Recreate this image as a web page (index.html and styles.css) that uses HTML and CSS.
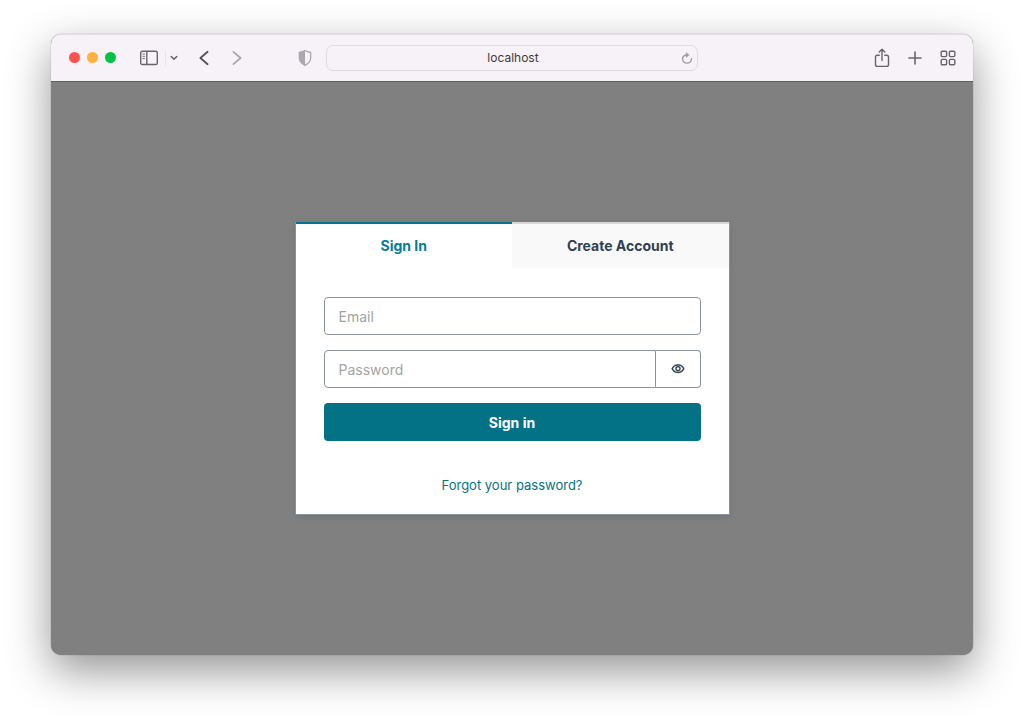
FILE: index.html
```html
<!DOCTYPE html>
<html lang="en">
<head>
<meta charset="utf-8">
<title>Sign In</title>
<link rel="stylesheet" href="styles.css">
</head>
<body>
<div class="window">
  <header class="toolbar">
    <div class="tools">
      <div class="lights"><span class="light close"></span><span class="light minimize"></span><span class="light zoom"></span></div>
      <button class="tool sidebar" aria-label="Sidebar">
        <svg width="18" height="16" viewBox="0 0 18 16" fill="none" stroke="currentColor" stroke-width="1.4"><rect x=".7" y="1.2" width="16.6" height="13.3" rx="1.6"/><path d="M6.8 1.2v13.3"/><path d="M2.6 4h2.2M2.6 6.3h2.2M2.6 8.6h2.2" stroke-width="1"/></svg>
      </button>
      <button class="tool menu" aria-label="Tab groups">
        <svg width="8" height="6" viewBox="0 0 8 6" fill="none" stroke="currentColor" stroke-width="1.5" stroke-linecap="round" stroke-linejoin="round"><path d="M1.200 1.500l2.800 2.600 2.800-2.600"/></svg>
      </button>
      <button class="tool back" aria-label="Back">
        <svg width="10" height="16" viewBox="0 0 10 16" fill="none" stroke="currentColor" stroke-width="1.8" stroke-linecap="round" stroke-linejoin="round"><path d="M8.600 1.800L1.400 8l7.200 6.200"/></svg>
      </button>
      <button class="tool forward" aria-label="Forward" disabled>
        <svg width="10" height="16" viewBox="0 0 10 16" fill="none" stroke="currentColor" stroke-width="1.700" stroke-linecap="round" stroke-linejoin="round"><path d="M1.400 1.800L8.600 8l-7.200 6.200"/></svg>
      </button>
      <button class="tool shield" aria-label="Privacy report">
        <svg width="14" height="18" viewBox="0 0 14 18" fill="none"><path d="M7 1.500c1.800 1.200 3.600 1.600 5.700 2v5.200c0 3.800-2.600 6.100-5.700 7.600-3.100-1.500-5.700-3.800-5.700-7.600V3.500C3.400 3.100 5.200 2.700 7 1.500z" stroke="currentColor" stroke-width="1.300" stroke-linejoin="round"/><path d="M7 1.500v14.800c-3.100-1.500-5.700-3.800-5.700-7.600V3.500C3.400 3.100 5.200 2.700 7 1.500z" fill="currentColor"/></svg>
      </button>
    </div>
    <div class="address">
      <input class="url" type="text" value="localhost" aria-label="Address">
      <button class="tool reload" aria-label="Reload">
        <svg width="12" height="12" viewBox="0 0 12 12" fill="none" stroke="currentColor" stroke-width="1.400" stroke-linecap="round" stroke-linejoin="round"><path d="M6.500 3C3.700 2.600 1.500 4.400 1.500 6.800c0 2.500 2 4.300 4.500 4.300s4.500-1.800 4.500-4.300"/><path d="M5.200.8v4.600L8 3.100z" fill="currentColor" stroke-width=".5"/></svg>
      </button>
    </div>
    <div class="tools actions">
      <button class="tool" aria-label="Share">
        <svg width="18" height="20" viewBox="0 0 18 20" fill="none" stroke="currentColor" stroke-width="1.400" stroke-linecap="round" stroke-linejoin="round"><path d="M6.200 7.300H4.400c-1.200 0-1.900.7-1.900 1.900v7.300c0 1.200.7 1.900 1.900 1.900h9.200c1.200 0 1.900-.7 1.900-1.900V9.200c0-1.200-.7-1.900-1.900-1.900h-1.800M9 12.500V1.300M6.200 4L9 1.200 11.800 4"/></svg>
      </button>
      <button class="tool" aria-label="New tab">
        <svg width="18" height="18" viewBox="0 0 18 18" fill="none" stroke="currentColor" stroke-width="1.600" stroke-linecap="round"><path d="M9 3v12M3 9h12"/></svg>
      </button>
      <button class="tool" aria-label="Tab overview">
        <svg width="18" height="18" viewBox="0 0 18 18" fill="none" stroke="currentColor" stroke-width="1.400"><rect x="2.200" y="2.200" width="5.400" height="5.400" rx="1.100"/><rect x="10.400" y="2.200" width="5.400" height="5.400" rx="1.100"/><rect x="2.200" y="10.400" width="5.400" height="5.400" rx="1.100"/><rect x="10.400" y="10.400" width="5.400" height="5.400" rx="1.100"/></svg>
      </button>
    </div>
  </header>
  <main class="page">
    <section class="card">
      <div class="tabs" role="tablist">
        <button class="tab active" role="tab" aria-selected="true">Sign In</button>
        <button class="tab" role="tab" aria-selected="false">Create Account</button>
      </div>
      <form class="form">
        <input class="field" type="email" placeholder="Email" aria-label="Email">
        <div class="password">
          <input class="field" type="password" placeholder="Password" aria-label="Password">
          <button class="reveal" type="button" aria-label="Show password">
            <svg width="14" height="14" viewBox="0 0 24 24" fill="currentColor" stroke="currentColor" stroke-width=".5"><path d="M12 6c3.790 0 7.170 2.130 8.820 5.500C19.170 14.870 15.790 17 12 17s-7.170-2.130-8.820-5.500C4.830 8.130 8.210 6 12 6m0-2C7 4 2.730 7.110 1 11.500 2.730 15.890 7 19 12 19s9.270-3.110 11-7.500C21.270 7.110 17 4 12 4zm0 5c1.380 0 2.500 1.120 2.500 2.500S13.380 14 12 14s-2.500-1.120-2.500-2.500S10.620 9 12 9m0-2c-2.480 0-4.500 2.020-4.500 4.500S9.520 16 12 16s4.500-2.020 4.500-4.500S14.480 7 12 7z"/></svg>
          </button>
        </div>
        <button class="submit" type="submit">Sign in</button>
      </form>
      <footer class="footer"><a class="link" href="#">Forgot your password?</a></footer>
    </section>
  </main>
</div>
</body>
</html>
```
FILE: styles.css
```css
* { box-sizing: border-box; }

body {
  margin: 0;
  min-height: 100vh;
  padding: 34px 51px 67px;
  display: flex;
  background: #fff;
  font-family: Inter, "Liberation Sans", sans-serif;
}

button, input { font: inherit; margin: 0; }

.window {
  flex: 1;
  display: flex;
  flex-direction: column;
  border-radius: 10px;
  overflow: hidden;
  background: #808080;
  box-shadow: 0 0 1px rgba(0, 0, 0, .5), 0 16px 44px rgba(0, 0, 0, .42);
}

.toolbar {
  display: grid;
  grid-template-columns: 1fr minmax(120px, 372px) 1fr;
  align-items: center;
  height: 48px;
  padding-bottom: 1px;
  background: #f7f2f8;
  border-top: 1px solid #e2dde3;
  border-bottom: 1px solid #5e605f;
}

.tools { display: flex; align-items: center; padding-left: 18px; }
.actions { justify-content: flex-end; gap: 15px; padding: 0 16px 0 0; }

.lights { display: flex; gap: 7px; margin-right: 24px; }
.light { width: 11px; height: 11px; border-radius: 50%; }
.close { background: #fe5250; }
.minimize { background: #feb13d; }
.zoom { background: #02c144; }

.tool { display: flex; padding: 0; border: 0; background: none; color: #69646b; }
.sidebar { margin-right: 7px; }
.menu { align-items: center; height: 16px; padding-left: 4px; border-left: 1px solid #ebe6ec; margin-right: 21px; }
.back { color: #545056; margin-right: 23px; }
.forward { color: #aaa5ac; }
.shield { color: #aca7ae; margin: 0 14px 0 auto; }

.address {
  display: flex;
  align-items: center;
  height: 26px;
  padding: 0 4px 0 18px;
  border: 1px solid #dfd9e0;
  border-radius: 7px;
}
.url {
  flex: 1;
  min-width: 0;
  padding: 0;
  border: 0;
  background: none;
  text-align: center;
  font-size: 12px;
  color: #3d3a3e;
}
.reload { color: #a09ba2; }

.page { flex: 1; display: grid; place-items: center; }

.card {
  width: 100%;
  max-width: 435px;
  background: #fff;
  border: 1px solid #89949f;
  box-shadow: 0 2px 6px rgba(13, 26, 38, .12);
}

.tabs { display: grid; grid-template-columns: 1fr 1fr; margin-top: -1px; }
.tab {
  height: 46px;
  padding: 0 0 1px;
  border: 0;
  border-top: 2px solid #d5d9dc;
  background: #f9f9f9;
  color: #304050;
  font-size: 14px;
  font-weight: 700;
}
.active { border-top-color: #067489; background: #fff; color: #047d95; }

.form { display: flex; flex-direction: column; gap: 15px; padding: 29px 28px 0; }
.field {
  width: 100%;
  height: 38px;
  padding: 0 14px;
  border: 1px solid #89949f;
  border-radius: 4px;
  background: #fff;
  color: #304050;
  font-size: 14px;
}
.field::placeholder { color: #a3a3a3; opacity: 1; }

.password { display: flex; }
.password .field { flex: 1; min-width: 0; border-radius: 4px 0 0 4px; }
.reveal {
  display: flex;
  align-items: center;
  justify-content: center;
  width: 45px;
  padding: 0;
  border: 1px solid #89949f;
  border-left: 0;
  border-radius: 0 4px 4px 0;
  background: #fff;
  color: #304050;
}

.submit {
  height: 38px;
  border: 0;
  border-radius: 4px;
  background: #047286;
  color: #fff;
  font-size: 14px;
  font-weight: 700;
}

.footer { padding: 34px 28px 19px; text-align: center; line-height: 20px; font-size: 13px; }
.link { color: #047286; text-decoration: none; }
```
